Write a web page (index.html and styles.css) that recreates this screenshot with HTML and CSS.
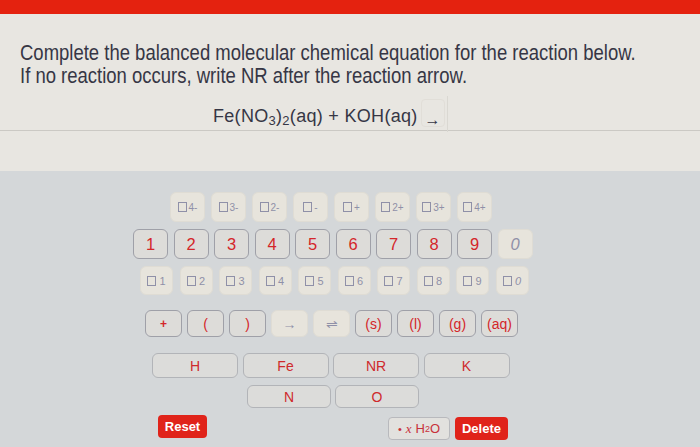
FILE: index.html
```html
<!DOCTYPE html>
<html>
<head>
<meta charset="utf-8">
<link rel="stylesheet" href="styles.css">
</head>
<body>
<div class="topbar"></div>
<div class="question">
  <p class="line">Complete the balanced molecular chemical equation for the reaction below.</p>
  <p class="line">If no reaction occurs, write NR after the reaction arrow.</p>
  <div class="equation">
    <span class="eq">Fe(NO<sub>3</sub>)<sub>2</sub>(aq) + KOH(aq)</span><span class="slot">→</span><span class="rule"></span>
  </div>
</div>
<div class="spacer"></div>
<div class="keypad">
  <div class="row r1">
    <div class="key faded"><span class="box"></span><sup>4-</sup></div>
    <div class="key faded"><span class="box"></span><sup>3-</sup></div>
    <div class="key faded"><span class="box"></span><sup>2-</sup></div>
    <div class="key faded"><span class="box"></span><sup>-</sup></div>
    <div class="key faded"><span class="box"></span><sup>+</sup></div>
    <div class="key faded"><span class="box"></span><sup>2+</sup></div>
    <div class="key faded"><span class="box"></span><sup>3+</sup></div>
    <div class="key faded"><span class="box"></span><sup>4+</sup></div>
  </div>
  <div class="row r2">
    <div class="key active">1</div>
    <div class="key active">2</div>
    <div class="key active">3</div>
    <div class="key active">4</div>
    <div class="key active">5</div>
    <div class="key active">6</div>
    <div class="key active">7</div>
    <div class="key active">8</div>
    <div class="key active">9</div>
    <div class="key faded zero">0</div>
  </div>
  <div class="row r3">
    <div class="key faded"><span class="box"></span><sub>1</sub></div>
    <div class="key faded"><span class="box"></span><sub>2</sub></div>
    <div class="key faded"><span class="box"></span><sub>3</sub></div>
    <div class="key faded"><span class="box"></span><sub>4</sub></div>
    <div class="key faded"><span class="box"></span><sub>5</sub></div>
    <div class="key faded"><span class="box"></span><sub>6</sub></div>
    <div class="key faded"><span class="box"></span><sub>7</sub></div>
    <div class="key faded"><span class="box"></span><sub>8</sub></div>
    <div class="key faded"><span class="box"></span><sub>9</sub></div>
    <div class="key faded"><span class="box"></span><sub class="it">0</sub></div>
  </div>
  <div class="row r4">
    <div class="key active plus">+</div>
    <div class="key active">(</div>
    <div class="key active">)</div>
    <div class="key faded arrow">→</div>
    <div class="key faded arrow">⇌</div>
    <div class="key active">(s)</div>
    <div class="key active">(l)</div>
    <div class="key active">(g)</div>
    <div class="key active">(aq)</div>
  </div>
  <div class="row r5">
    <div class="key el">H</div>
    <div class="key el">Fe</div>
    <div class="key el">NR</div>
    <div class="key el">K</div>
  </div>
  <div class="row r6">
    <div class="key el">N</div>
    <div class="key el">O</div>
  </div>
  <div class="row r7">
    <div class="btn red reset">Reset</div>
    <div class="grow"></div>
    <div class="btn water"><span class="dot">•</span><i class="x">x</i>H<sub>2</sub>O</div>
    <div class="btn red del">Delete</div>
  </div>
</div>
</body>
</html>
```
FILE: styles.css
```css
html, body {
  margin: 0;
  padding: 0;
}
body {
  width: 700px;
  height: 447px;
  overflow: hidden;
  background: #d4d7d9;
  font-family: "Liberation Sans", Arial, sans-serif;
}
.topbar {
  height: 14px;
  background: #e4220f;
}
.question {
  background: #e8e6e1;
  padding: 28px 0 0 20px;
  height: 88px;
  border-bottom: 1px solid #cbc9c4;
  color: #363645;
}
.line {
  margin: 0;
  font-size: 21.5px;
  line-height: 23px;
  white-space: nowrap;
  transform: scaleX(0.86);
  transform-origin: left center;
}
.equation {
  display: flex;
  align-items: flex-start;
  margin: 11px 0 0 193px;
  height: 34px;
}
.eq {
  font-size: 18px;
  padding-top: 7px;
  letter-spacing: 0.3px;
}
.eq sub {
  font-size: 13px;
  vertical-align: -3px;
}
.slot {
  box-sizing: border-box;
  width: 24px;
  height: 28px;
  margin-left: 3px;
  border: 1px solid #e1ded8;
  border-radius: 4px;
  font-size: 16px;
  line-height: 16px;
  text-align: center;
  padding-top: 12px;
  color: #363645;
}
.rule {
  width: 1px;
  height: 36px;
  background: #dad8d2;
  margin-left: 2px;
  margin-top: -3px;
}
.spacer {
  height: 40px;
  background: #e8e6e1;
}
.keypad {
  padding-top: 21px;
}
.row {
  display: flex;
}
.key {
  box-sizing: border-box;
  display: flex;
  align-items: center;
  justify-content: center;
  border-radius: 6px;
  font-size: 15px;
}
.faded {
  background: #e7e4dc;
  color: #8f90a8;
  border: 1px solid #dfdcd4;
}
.active {
  background: #dddcd9;
  color: #d4262a;
  border: 1px solid #9fa0a8;
}
.el {
  background: #dcdcda;
  color: #cf2a2c;
  border: 1px solid #b2b4b8;
  font-size: 14px;
}
.box {
  display: inline-block;
  width: 9px;
  height: 10px;
  border: 1.5px solid #8f90a8;
  box-sizing: border-box;
}
.key sup {
  font-size: 10px;
  vertical-align: 7px;
  margin-left: 2px;
}
.key sub {
  font-size: 11px;
  vertical-align: -5px;
  margin-left: 3px;
}
.it, .zero {
  font-style: italic;
}
.r1 {
  padding-left: 170px;
  gap: 6px;
}
.r1 .key {
  width: 35px;
  height: 30px;
}
.r2 {
  padding-left: 133px;
  gap: 5.5px;
  margin-top: 7px;
}
.r2 .key {
  width: 35px;
  height: 30px;
  font-size: 16.5px;
}
.r3 {
  padding-left: 140px;
  gap: 6.5px;
  margin-top: 7px;
}
.r3 .key {
  width: 33px;
  height: 29px;
}
.r4 {
  padding-left: 145px;
  gap: 5px;
  margin-top: 15px;
}
.r4 .key {
  width: 37px;
  height: 27px;
  font-size: 14px;
}
.r4 .plus {
  font-size: 12px;
  font-weight: bold;
}
.arrow {
  font-size: 12px;
}
.r5 {
  padding-left: 152px;
  gap: 4.5px;
  margin-top: 16px;
}
.r5 .key {
  width: 86px;
  height: 25px;
}
.r6 {
  padding-left: 247px;
  gap: 4px;
  margin-top: 7px;
}
.r6 .key {
  width: 84px;
  height: 23px;
}
.r7 {
  padding-left: 158px;
  width: 350px;
  margin-top: 7px;
  align-items: flex-start;
}
.grow {
  flex: 1;
}
.btn {
  box-sizing: border-box;
  display: flex;
  align-items: center;
  justify-content: center;
  height: 23px;
  border-radius: 4px;
  font-size: 13px;
}
.red {
  background: #e0231a;
  color: #ffffff;
  font-weight: bold;
}
.reset {
  width: 49px;
}
.water {
  width: 62px;
  margin-top: 2px;
  background: #e2e1de;
  border: 1px solid #b8b9bd;
  color: #c8303a;
  font-size: 13px;
}
.water .dot {
  font-size: 11px;
  margin-right: 4px;
}
.water .x {
  font-family: "Liberation Serif", serif;
  margin-right: 4px;
}
.water sub {
  font-size: 9px;
  vertical-align: -2px;
}
.del {
  width: 53px;
  margin-left: 5px;
  margin-top: 2px;
}
```
